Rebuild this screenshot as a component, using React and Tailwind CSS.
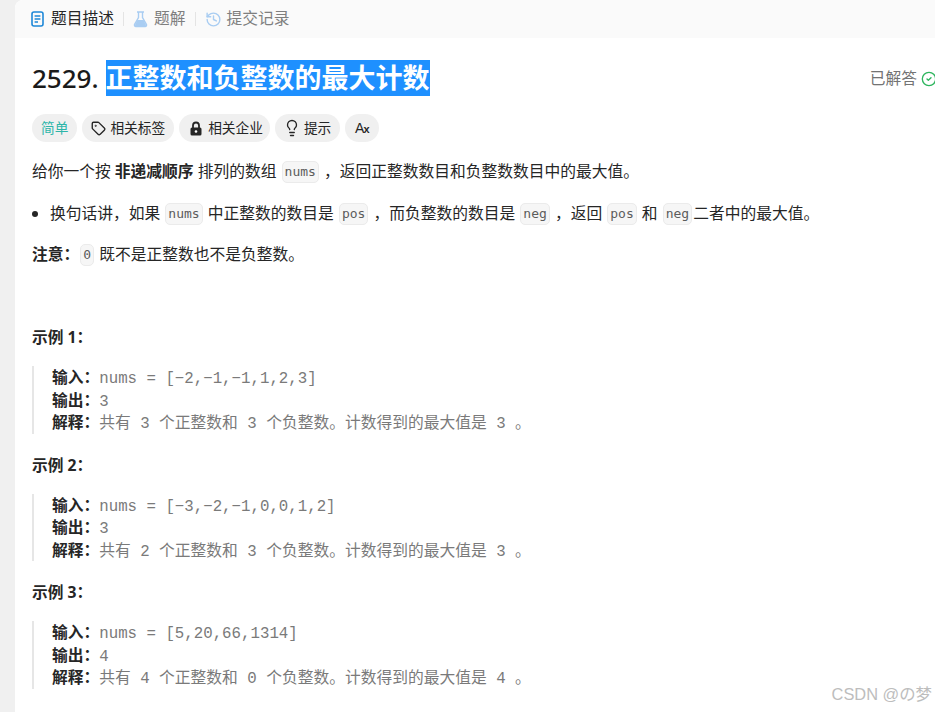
import React from "react";
import { Lightbulb, Tag, CircleCheck, History } from "lucide-react";

const Code = ({ children }) => (
  <code className="mx-[1px] inline-block h-[22px] rounded-[5px] border border-[#ebebeb] bg-[#f6f6f6] px-[2px] font-['DejaVu_Sans_Mono',monospace] text-[13px] leading-[20px] text-[#5c5c5c]">
    {children}
  </code>
);

const Pill = ({ icon, children }) => (
  <div className="flex h-[28px] items-center gap-[4px] rounded-full bg-[#f0f0f0] px-[9px] text-[13.7px] text-[#262626]">
    {icon}
    <span>{children}</span>
  </div>
);

const PreLine = ({ label, children }) => (
  <div className="h-[22.5px]">
    <b className="font-['Noto_Sans_CJK_SC',sans-serif] font-bold text-[#262626]">{label}</b>
    {children}
  </div>
);

const Example = ({ title, input, output, explain }) => (
  <div>
    <h3 className="h-[22px] text-[15.7px] font-bold leading-[22px] text-[#262626]">{title}</h3>
    <pre className="mt-[18px] border-l-2 border-[#e6e6e6] pl-[18px] font-['Liberation_Mono','Noto_Sans_CJK_SC',monospace] text-[15.75px] leading-[22.5px] text-[#7a7a7a]">
      <PreLine label="输入：">{input}</PreLine>
      <PreLine label="输出：">{output}</PreLine>
      <PreLine label="解释：">{explain}</PreLine>
    </pre>
  </div>
);

export default function App() {
  return (
    <div className="h-[712px] w-[935px] overflow-hidden bg-[#f0f0f0] pl-[15px] font-['Noto_Sans','Noto_Sans_CJK_SC',sans-serif]">
      <div className="relative h-full overflow-hidden rounded-tl-[8px] bg-white">
        {/* tabs */}
        <div className="flex h-[38px] items-center bg-[#fafafa] pl-[16px] text-[15.75px]">
          <div className="flex items-center gap-[7px] text-[#262626]">
            <svg width="13" height="16" viewBox="0 0 13 16" fill="none">
              <rect x="1" y="1" width="11" height="14" rx="2" stroke="#1e88d8" strokeWidth="1.6" />
              <path d="M3.6 5h5.8M3.6 8h5.8M3.6 11h3.4" stroke="#1e88d8" strokeWidth="1.5" />
            </svg>
            <span>题目描述</span>
          </div>
          <div className="mx-[9px] h-[14px] w-px bg-[#e4e4e4]" />
          <div className="flex items-center gap-[6px] text-[#7f7f7f]">
            <svg width="15" height="17" viewBox="0 0 15 17" fill="none">
              <path d="M4 1h7M5.5 1.5v5L1.6 13.4a1.5 1.5 0 0 0 1.3 2.2h9.2a1.5 1.5 0 0 0 1.3-2.2L9.5 6.5v-5" stroke="#a9cdf2" strokeWidth="1.4" />
              <path d="M4.4 9h6.2l2.6 5.2-.8 1.4H2.6l-.8-1.4z" fill="#a9cdf2" />
            </svg>
            <span>题解</span>
          </div>
          <div className="mx-[9px] h-[14px] w-px bg-[#e4e4e4]" />
          <div className="flex items-center gap-[5px] text-[#7f7f7f]">
            <History size={17} color="#a9cdf2" strokeWidth={2} />
            <span>提交记录</span>
          </div>
        </div>

        <div className="pl-[17px]">
          {/* title */}
          <div className="mt-[22px] flex h-[36px] items-center">
            <span className="text-[26px] font-medium leading-[36px] text-[#1a1a1a]">2529.</span>
            <span className="ml-[7px] bg-[#1e90ff] text-[27px] font-bold leading-[36px] text-white">正整数和负整数的最大计数</span>
            <div className="ml-auto mt-[2px] flex items-center gap-[4px] text-[15.75px] text-[#737373]">
              <span>已解答</span>
              <CircleCheck size={16} color="#2db55d" strokeWidth={2} className="-mr-[2px]" />
            </div>
          </div>

          {/* badges */}
          <div className="mt-[18px] flex gap-[5px]">
            <div className="flex h-[28px] items-center rounded-full bg-[#f0f0f0] px-[9px] text-[13.7px] text-[#2cb5a9]">简单</div>
            <Pill icon={<Tag size={15} color="#262626" strokeWidth={2.2} />}>相关标签</Pill>
            <Pill
              icon={
                <svg width="14" height="15" viewBox="0 0 14 15" className="mx-[1px]">
                  <path d="M4 7V4.5a3 3 0 0 1 6 0V7" fill="none" stroke="#262626" strokeWidth="1.8" />
                  <rect x="1.5" y="6.5" width="11" height="8" rx="1.5" fill="#262626" />
                  <circle cx="7" cy="10.5" r="1.3" fill="#fff" />
                </svg>
              }
            >
              <span className="-mr-[2px] block">相关企业</span>
            </Pill>
            <Pill icon={<Lightbulb size={18} color="#262626" strokeWidth={1.8} className="-ml-[1px] -mr-[1px]" />}>提示</Pill>
            <div className="flex h-[28px] w-[34px] items-center justify-center rounded-full bg-[#f0f0f0] font-['Liberation_Sans',sans-serif] text-[14px] text-[#262626]">
              A<span className="-ml-[1px] mt-[2px] text-[11px] font-bold">x</span>
            </div>
          </div>

          {/* description */}
          <div className="mt-[18px] text-[15.75px] text-[#262626]">
            <p className="flex h-[24px] items-center whitespace-pre">
              给你一个按 <b className="font-bold">非递减顺序</b> 排列的数组 <Code>nums</Code> ，返回正整数数目和负整数数目中的最大值。
            </p>
            <div className="mt-[18px] flex h-[24px] items-center whitespace-pre">
              <span className="mr-[12px] h-[6px] w-[6px] rounded-full bg-[#262626]" />
              换句话讲，如果 <Code>nums</Code> 中正整数的数目是 <Code>pos</Code> ，而负整数的数目是 <Code>neg</Code> ，返回 <Code>pos</Code> 和 <Code>neg</Code>二者中的最大值。
            </div>
            <p className="mt-[17px] flex h-[24px] items-center whitespace-pre">
              <b className="font-bold">注意：</b><Code>0</Code> 既不是正整数也不是负整数。
            </p>
          </div>

          {/* examples */}
          <div className="mt-[59px] flex flex-col gap-[20px]">
            <Example title="示例 1：" input="nums = [−2,−1,−1,1,2,3]" output="3" explain="共有 3 个正整数和 3 个负整数。计数得到的最大值是 3 。" />
            <Example title="示例 2：" input="nums = [−3,−2,−1,0,0,1,2]" output="3" explain="共有 2 个正整数和 3 个负整数。计数得到的最大值是 3 。" />
            <Example title="示例 3：" input="nums = [5,20,66,1314]" output="4" explain="共有 4 个正整数和 0 个负整数。计数得到的最大值是 4 。" />
          </div>
        </div>

        {/* watermark */}
        <div className="absolute right-[3px] bottom-[5px] font-['Liberation_Sans','Noto_Sans_CJK_JP',sans-serif] text-[16.4px] text-[#bdbdbd]">CSDN @の梦</div>
      </div>
    </div>
  );
}
